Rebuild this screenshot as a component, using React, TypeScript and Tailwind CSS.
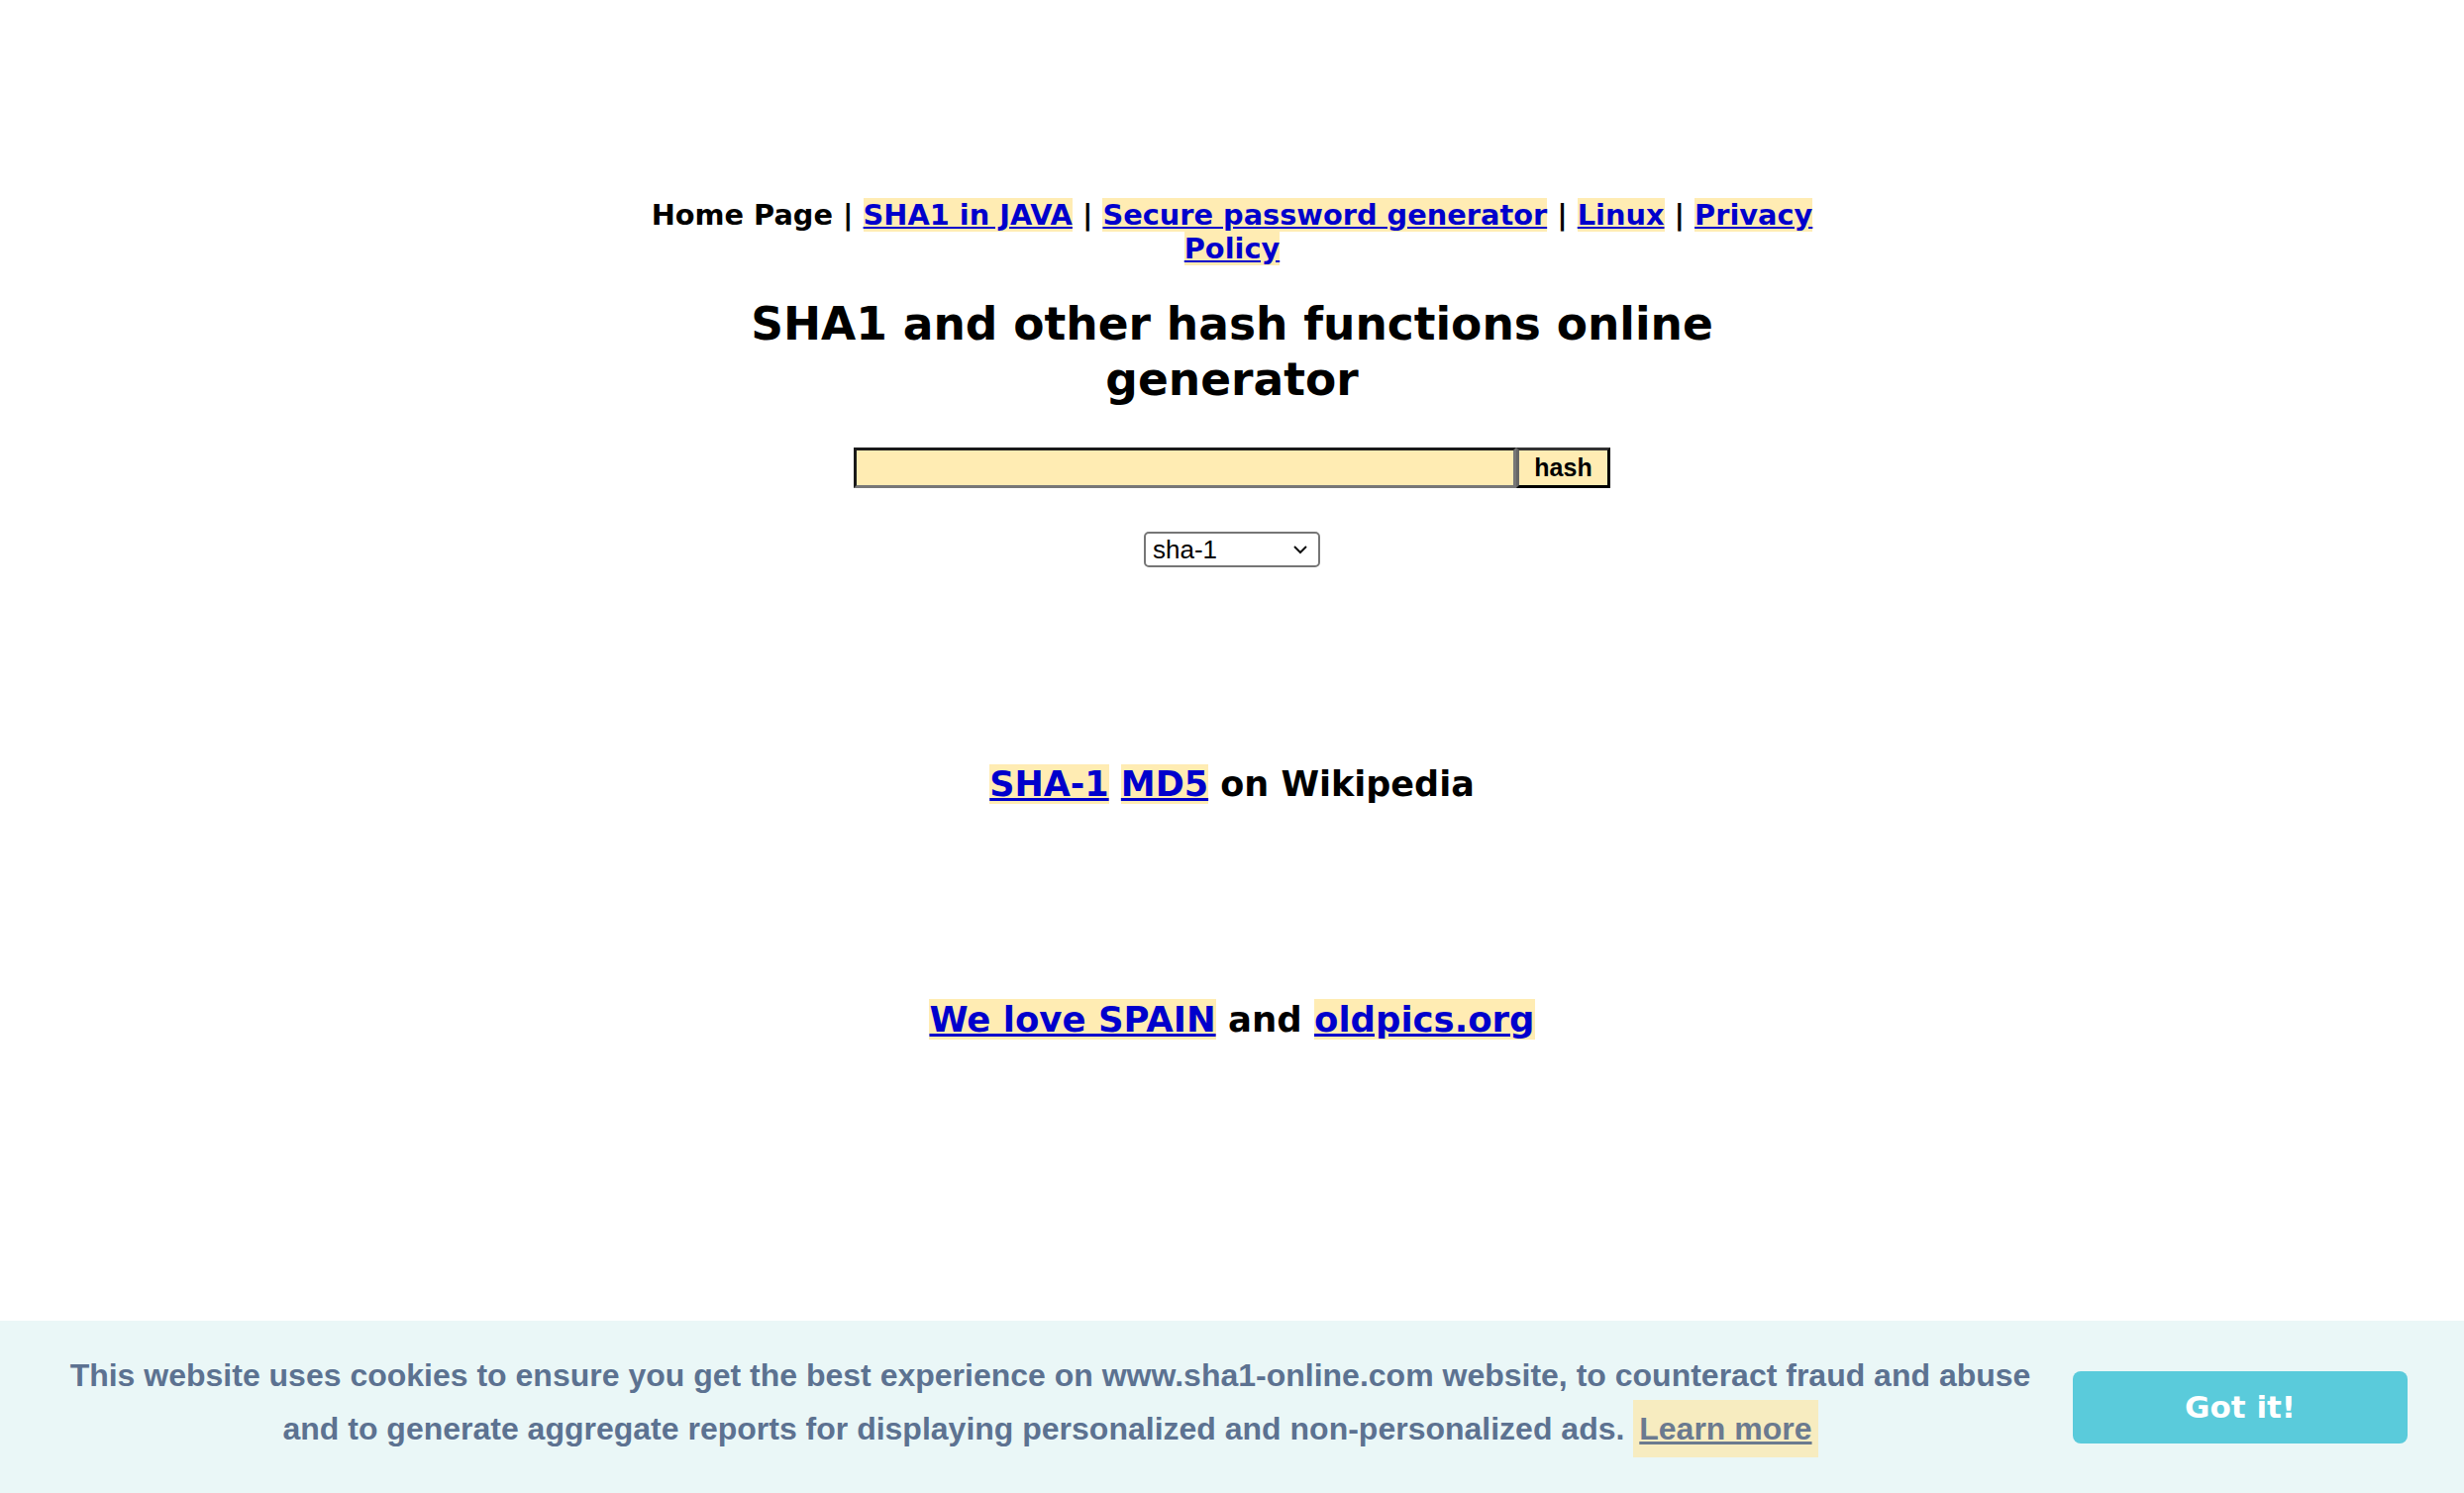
import { useState } from 'react'

const verdana = { fontFamily: '"DejaVu Sans", Verdana, sans-serif' }

function HashLink({ children }: { children: React.ReactNode }) {
  return <a href="#" className="text-[#0000cc] underline bg-[#ffecb3]">{children}</a>
}

export default function App() {
  const [text, setText] = useState('')
  const [algo, setAlgo] = useState('sha-1')

  return (
    <div className="min-h-screen bg-white font-bold text-black" style={verdana}>
      <div className="flex flex-col items-center pt-[200px]">
        <nav className="w-[1200px] text-center text-[28.8px] leading-[34px]">
          Home Page | <HashLink>SHA1 in JAVA</HashLink> | <HashLink>Secure password generator</HashLink> |{' '}
          <HashLink>Linux</HashLink> | <HashLink>Privacy Policy</HashLink>
        </nav>

        <h1 className="mt-[32px] w-[1100px] text-center text-[45.5px] leading-[56px]">
          SHA1 and other hash functions online generator
        </h1>

        <form className="mt-[40px] flex" onSubmit={(e) => e.preventDefault()}>
          <input
            type="text"
            value={text}
            onChange={(e) => setText(e.target.value)}
            className="w-[669px] h-[41px] bg-[#ffecb3] border-[3px] border-t-[#1a1a1a] border-l-[#1a1a1a] border-b-[#777] border-r-[#777] outline-none px-2"
          />
          <button
            type="submit"
            className="w-[95px] h-[41px] bg-[#ffecb3] border-[3px] border-t-[#333] border-l-[#666] border-b-black border-r-black text-[25px] leading-none"
            style={{ fontFamily: '"Liberation Sans", Arial, sans-serif' }}
          >
            hash
          </button>
        </form>

        <div className="mt-[44px] relative">
          <select
            value={algo}
            onChange={(e) => setAlgo(e.target.value)}
            className="appearance-none w-[178px] h-[36px] bg-white border-2 border-[#767676] rounded-[5px] pl-[7px] text-[26px] font-normal leading-none"
            style={{ fontFamily: '"Liberation Sans", Arial, sans-serif' }}
          >
            <option>sha-1</option>
            <option>md5</option>
            <option>sha-256</option>
            <option>sha-512</option>
          </select>
          <svg className="pointer-events-none absolute right-[11px] top-[12px]" width="18" height="12" viewBox="0 0 18 12">
            <path d="M3 3 L9 9 L15 3" fill="none" stroke="#111" strokeWidth="2" />
          </svg>
        </div>

        <p className="mt-[197px] text-[35px] leading-[44px]">
          <HashLink>SHA-1</HashLink> <HashLink>MD5</HashLink> on Wikipedia
        </p>

        <p className="mt-[194px] text-[35.5px] leading-[44px]">
          <HashLink>We love SPAIN</HashLink> and <HashLink>oldpics.org</HashLink>
        </p>
      </div>

      <div className="fixed bottom-0 left-0 right-0 h-[174px] bg-[#eaf7f7] flex items-center pl-[40px] pr-[57px] pb-[10px]">
        <div
          className="flex-1 text-center text-[32px] leading-[54px] text-[#5c7291]"
          style={{ fontFamily: '"Liberation Sans", Arial, sans-serif' }}
        >
          This website uses cookies to ensure you get the best experience on www.sha1-online.com website, to counteract fraud and abuse
          <br />
          and to generate aggregate reports for displaying personalized and non-personalized ads.{' '}
          <a href="#" className="underline text-[#6b7a8f] bg-[#f7ecc0] py-[11px] px-[6px]">Learn more</a>
        </div>
        <button className="ml-[12px] mt-[10px] w-[338px] h-[73px] rounded-[8px] bg-[#5acbdb] text-white text-[31px]" style={verdana}>
          Got it!
        </button>
      </div>
    </div>
  )
}
